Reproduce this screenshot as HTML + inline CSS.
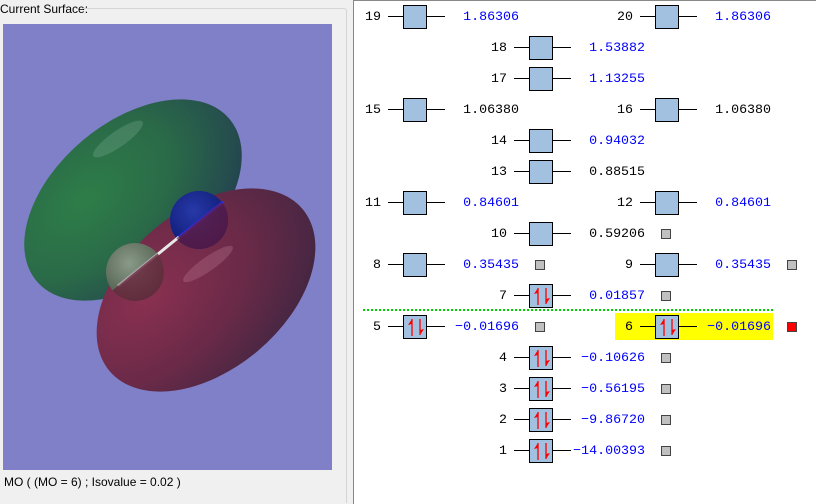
<!DOCTYPE html>
<html><head><style>
body{margin:0;width:816px;height:504px;background:#f0f0f0;position:relative;overflow:hidden;font-family:"Liberation Sans",sans-serif}
#right{position:absolute;left:353px;top:0;width:463px;height:504px;background:#fff;border-left:1px solid #888;border-top:1px solid #888;box-sizing:border-box}
.r{position:absolute;height:24px;width:200px;font-family:"Liberation Mono",monospace;font-size:13.3px}
.lb{position:absolute;left:0;width:26px;text-align:right;top:4px;color:#000}
.ln{position:absolute;top:11px;height:1px;background:#000}
.bx{position:absolute;left:48px;top:0;width:22px;height:22px;border:1px solid #000;background:#a2c0e0}
.v{position:absolute;right:36px;top:4px;text-align:right;color:#0000ff}
.k{color:#000}
.sq{position:absolute;left:180px;top:7px;width:8px;height:8px;background:#c0c0c0;border:1px solid #444}
.red{background:#f00}
.bx svg{position:absolute;left:0;top:0}
</style></head><body>
<div style="position:absolute;left:0;top:2px;font-size:12px;color:#000">Current Surface:</div>
<div style="position:absolute;left:82px;top:8px;width:264px;height:494px;border:1px solid #d5d5d5;border-left:none;border-bottom:none;border-radius:0 3px 0 0"></div>
<div style="position:absolute;left:3px;top:24px;width:329px;height:446px;background:#8080c8;overflow:hidden">
<svg width="329" height="446">
<defs>
<radialGradient id="g" cx="0.35" cy="0.3" r="0.8"><stop offset="0" stop-color="#2e7e48"/><stop offset="0.5" stop-color="#2a6a48"/><stop offset="1" stop-color="#234050"/></radialGradient>
<radialGradient id="rd" cx="0.3" cy="0.3" r="0.9"><stop offset="0" stop-color="#8a3050"/><stop offset="0.5" stop-color="#6a2a48"/><stop offset="1" stop-color="#3a2540"/></radialGradient>
<radialGradient id="b" cx="0.4" cy="0.35" r="0.7"><stop offset="0" stop-color="#2838a8"/><stop offset="1" stop-color="#0a1a70"/></radialGradient>
<radialGradient id="w" cx="0.4" cy="0.35" r="0.7"><stop offset="0" stop-color="#8a9a88"/><stop offset="1" stop-color="#4a5848"/></radialGradient>
<clipPath id="sp"><circle cx="196" cy="196" r="29"/><circle cx="132" cy="248" r="29"/></clipPath>
<clipPath id="hp"><polygon points="60,306.5 270,136 329,136 329,446 60,446"/></clipPath>
</defs>
<ellipse cx="130" cy="176" rx="126" ry="78" transform="rotate(-40 130 176)" fill="url(#g)"/>
<ellipse cx="115" cy="115" rx="30" ry="8" transform="rotate(-35 115 115)" fill="#7fb095" opacity="0.3"/>
<ellipse cx="203" cy="266" rx="126" ry="80" transform="rotate(-40 203 266)" fill="url(#rd)"/>
<ellipse cx="205" cy="240" rx="30" ry="7" transform="rotate(-35 205 240)" fill="#c08098" opacity="0.3"/>
<circle cx="196" cy="196" r="29" fill="url(#b)"/>
<circle cx="132" cy="248" r="29" fill="url(#w)"/>
<line x1="155" y1="230" x2="176" y2="213" stroke="#e8e8e8" stroke-width="3"/>
<line x1="115" y1="262" x2="155" y2="230" stroke="#aaa" stroke-width="3"/>
<line x1="176" y1="213" x2="220" y2="178" stroke="#2030ff" stroke-width="3"/>
<g clip-path="url(#sp)"><g clip-path="url(#hp)"><rect width="329" height="446" fill="#6a1a38" opacity="0.7"/></g></g>
</svg></div>
<div style="position:absolute;left:4px;top:475px;font-size:12px;color:#000">MO ( (MO = 6) ; Isovalue = 0.02 )</div>
<div id="right"></div>
<div style="position:absolute;left:363px;top:309px;width:410px;border-top:2px dotted #00d000"></div>
<div style="position:absolute;left:615px;top:313px;width:158px;height:27px;background:#ffff00"></div>

<div class="r" style="left:355px;top:5px"><span class="lb">19</span><i class="ln" style="left:33px;width:15px"></i><i class="bx"></i><i class="ln" style="left:72px;width:18px"></i><span class="v">1.86306</span></div>
<div class="r" style="left:607px;top:5px"><span class="lb">20</span><i class="ln" style="left:33px;width:15px"></i><i class="bx"></i><i class="ln" style="left:72px;width:18px"></i><span class="v">1.86306</span></div>
<div class="r" style="left:481px;top:36px"><span class="lb">18</span><i class="ln" style="left:33px;width:15px"></i><i class="bx"></i><i class="ln" style="left:72px;width:18px"></i><span class="v">1.53882</span></div>
<div class="r" style="left:481px;top:67px"><span class="lb">17</span><i class="ln" style="left:33px;width:15px"></i><i class="bx"></i><i class="ln" style="left:72px;width:18px"></i><span class="v">1.13255</span></div>
<div class="r" style="left:355px;top:98px"><span class="lb">15</span><i class="ln" style="left:33px;width:15px"></i><i class="bx"></i><i class="ln" style="left:72px;width:18px"></i><span class="v k">1.06380</span></div>
<div class="r" style="left:607px;top:98px"><span class="lb">16</span><i class="ln" style="left:33px;width:15px"></i><i class="bx"></i><i class="ln" style="left:72px;width:18px"></i><span class="v k">1.06380</span></div>
<div class="r" style="left:481px;top:129px"><span class="lb">14</span><i class="ln" style="left:33px;width:15px"></i><i class="bx"></i><i class="ln" style="left:72px;width:18px"></i><span class="v">0.94032</span></div>
<div class="r" style="left:481px;top:160px"><span class="lb">13</span><i class="ln" style="left:33px;width:15px"></i><i class="bx"></i><i class="ln" style="left:72px;width:18px"></i><span class="v k">0.88515</span></div>
<div class="r" style="left:355px;top:191px"><span class="lb">11</span><i class="ln" style="left:33px;width:15px"></i><i class="bx"></i><i class="ln" style="left:72px;width:18px"></i><span class="v">0.84601</span></div>
<div class="r" style="left:607px;top:191px"><span class="lb">12</span><i class="ln" style="left:33px;width:15px"></i><i class="bx"></i><i class="ln" style="left:72px;width:18px"></i><span class="v">0.84601</span></div>
<div class="r" style="left:481px;top:222px"><span class="lb">10</span><i class="ln" style="left:33px;width:15px"></i><i class="bx"></i><i class="ln" style="left:72px;width:18px"></i><span class="v k">0.59206</span><i class="sq"></i></div>
<div class="r" style="left:355px;top:253px"><span class="lb">8</span><i class="ln" style="left:33px;width:15px"></i><i class="bx"></i><i class="ln" style="left:72px;width:18px"></i><span class="v">0.35435</span><i class="sq"></i></div>
<div class="r" style="left:607px;top:253px"><span class="lb">9</span><i class="ln" style="left:33px;width:15px"></i><i class="bx"></i><i class="ln" style="left:72px;width:18px"></i><span class="v">0.35435</span><i class="sq"></i></div>

<svg width="0" height="0" style="position:absolute"><defs><g id="e"><path d="M8 20 V3" stroke="#f00" stroke-width="1.3" fill="none"/><path d="M8 3 L4 9 L8 8Z" fill="#f00"/><path d="M16 3 V19" stroke="#f00" stroke-width="1.3" fill="none"/><path d="M16 19 L20 13 L16 14Z" fill="#f00"/></g></defs></svg>

<div class="r" style="left:481px;top:284px"><span class="lb">7</span><i class="ln" style="left:33px;width:15px"></i><i class="bx"><svg width="22" height="22"><use href="#e"/></svg></i><i class="ln" style="left:72px;width:18px"></i><span class="v">0.01857</span><i class="sq"></i></div>
<div class="r" style="left:355px;top:315px"><span class="lb">5</span><i class="ln" style="left:33px;width:15px"></i><i class="bx"><svg width="22" height="22"><use href="#e"/></svg></i><i class="ln" style="left:72px;width:18px"></i><span class="v">−0.01696</span><i class="sq"></i></div>
<div class="r" style="left:607px;top:315px"><span class="lb">6</span><i class="ln" style="left:33px;width:15px"></i><i class="bx"><svg width="22" height="22"><use href="#e"/></svg></i><i class="ln" style="left:72px;width:18px"></i><span class="v">−0.01696</span><i class="sq red"></i></div>
<div class="r" style="left:481px;top:346px"><span class="lb">4</span><i class="ln" style="left:33px;width:15px"></i><i class="bx"><svg width="22" height="22"><use href="#e"/></svg></i><i class="ln" style="left:72px;width:18px"></i><span class="v">−0.10626</span><i class="sq"></i></div>
<div class="r" style="left:481px;top:377px"><span class="lb">3</span><i class="ln" style="left:33px;width:15px"></i><i class="bx"><svg width="22" height="22"><use href="#e"/></svg></i><i class="ln" style="left:72px;width:18px"></i><span class="v">−0.56195</span><i class="sq"></i></div>
<div class="r" style="left:481px;top:408px"><span class="lb">2</span><i class="ln" style="left:33px;width:15px"></i><i class="bx"><svg width="22" height="22"><use href="#e"/></svg></i><i class="ln" style="left:72px;width:18px"></i><span class="v">−9.86720</span><i class="sq"></i></div>
<div class="r" style="left:481px;top:439px"><span class="lb">1</span><i class="ln" style="left:33px;width:15px"></i><i class="bx"><svg width="22" height="22"><use href="#e"/></svg></i><i class="ln" style="left:72px;width:18px"></i><span class="v">−14.00393</span><i class="sq"></i></div>
</body></html>
